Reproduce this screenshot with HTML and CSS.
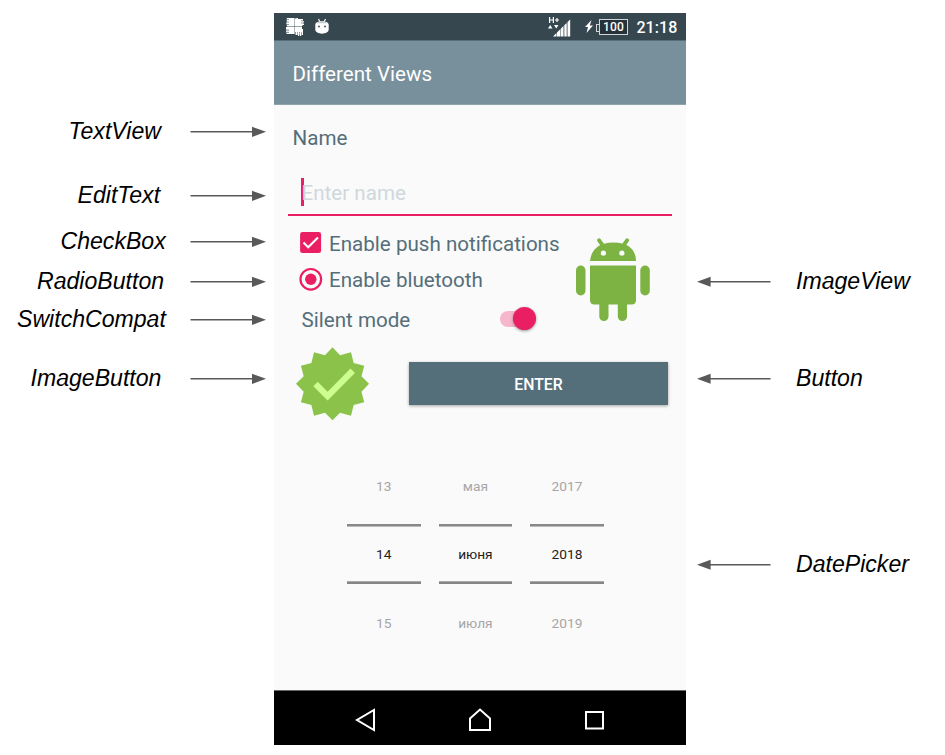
FILE: index.html
```html
<!DOCTYPE html>
<html lang="en">
<head>
<meta charset="utf-8">
<title>Different Views</title>
<link rel="stylesheet" href="styles.css">
</head>
<body>
<svg class="defs" width="0" height="0"><defs>
  <symbol id="arrow" viewBox="0 0 76 12"><path d="M.5 5.800h63" stroke="#595959" stroke-width="1.500"/><path d="M62 .7 76 5.800l-14 5.100z" fill="#595959"/></symbol>
</defs></svg>
<main class="board">
  <section class="notes left">
    <div class="note textview"><span>TextView</span><svg class="arrow"><use href="#arrow"/></svg></div>
    <div class="note edittext"><span>EditText</span><svg class="arrow"><use href="#arrow"/></svg></div>
    <div class="note checkbox"><span>CheckBox</span><svg class="arrow"><use href="#arrow"/></svg></div>
    <div class="note radiobutton"><span>RadioButton</span><svg class="arrow"><use href="#arrow"/></svg></div>
    <div class="note switchcompat"><span>SwitchCompat</span><svg class="arrow"><use href="#arrow"/></svg></div>
    <div class="note imagebutton"><span>ImageButton</span><svg class="arrow"><use href="#arrow"/></svg></div>
  </section>

  <section class="phone">
    <header class="status">
      <svg class="ic-hands" width="20" height="20" viewBox="0 0 20 20"><path d="M1.500 1h8v8h-8zM10 2h8v7h-8zM1 10h8.500v7H1zM10 10h7v8h-7z" fill="#fff" fill-opacity=".45"/><path d="M2 1h7.500v8.500H2V8h2V7H1.500V5.500H4v-1H2V3h2V2H2zM10 1.500h1.500V1H13v1h5v1.200h-2v1h3v1.300h-3v1h3V8h-2v1.500h-7zM1 10h8.500v7H2v-1h2v-1.300H1v-1h3v-1.200H1zM10 10h7v2h1v6h-1v-3h-.8v4H15v-4h-.8v4H13v-4h-.8v3H11v-3h-1z" fill="#fff"/></svg>
      <svg class="ic-droid" width="14" height="17" viewBox="0 0 14 17"><path d="M3.500 1 5 4M10.500 1 9 4" stroke="#fff" stroke-width="1.100"/><path d="M.3 6.500C.3 2 13.700 2 13.700 6.500v5c0 5.500-13.400 5.500-13.400 0z" fill="#fff"/><path d="M1.300 5.300C3.500 2.600 10.500 2.600 12.700 5.300z" fill="#c3c9cc"/><circle cx="4" cy="8.500" r=".9" fill="#37474f"/><circle cx="10" cy="8.500" r=".9" fill="#37474f"/></svg>
      <svg class="ic-signal" width="24" height="22" viewBox="0 0 24 22" fill="#fff"><path d="M1.600 0v6M5.400 0v6M1.600 3h3.800M7 3h4M9 1v4" stroke="#fff" stroke-width="1.200"/><path d="M0 11.500 2.200 8l2.300 3.500zM6 8h4.500l-2.200 3.500zM5 19.500 8.500 16v3.500zM9 15.500l3.500-3.500v7.500H9zM13 11.500 15.500 9v10.500H13zM16.300 8.200 18.700 6v13.500h-2.400zM19.500 5 22.200 2.500v17h-2.700z"/></svg>
      <svg class="ic-bolt" width="8" height="13" viewBox="0 0 8 13" fill="#fff"><path d="M6.500 0 0 7h3L1.500 13 8 5.500H4.800z"/></svg>
      <span class="battery">100</span>
      <span class="clock">21:18</span>
    </header>
    <div class="appbar">Different Views</div>
    <div class="content">
      <div class="name">Name</div>
      <div class="edit"><span>Enter name</span></div>
      <div class="options">
        <div class="list">
          <div class="row check"><svg width="22" height="22" viewBox="0 0 22 22"><rect x=".1" y=".1" width="21" height="21" rx="2.400" fill="#e91e63"/><path d="m3.500 10.500 4.700 4.700L18 5.400" fill="none" stroke="#fff" stroke-width="2.100"/></svg><span>Enable push notifications</span></div>
          <div class="row radio"><svg width="24" height="24" viewBox="0 0 24 24"><circle cx="11.800" cy="12.300" r="10.300" fill="none" stroke="#e91e63" stroke-width="2.200"/><circle cx="11.800" cy="12.300" r="5.700" fill="#e91e63"/></svg><span>Enable bluetooth</span></div>
          <div class="row silent"><span>Silent mode</span><i class="switch"></i></div>
        </div>
        <svg class="android" width="74" height="84" viewBox="0 0 74 84" fill="#7cb342"><path d="M14 23C15 14 20 8 28 5.800 34 4 41 4 47 5.800 55 8 60 14 60 23z"/><path d="m23 2.200 4.200 6M51.200 2.200l-4.200 6" stroke="#7cb342" stroke-width="3.800" stroke-linecap="round"/><path d="M14 27.500h46v34.500q0 4.500-4.500 4.500H51v12a4.600 4.600 0 0 1-9.200 0v-12h-9.300v12a4.600 4.600 0 0 1-9.200 0v-12h-4.800Q14 66.500 14 62z"/><rect x="0" y="27.500" width="9.500" height="30" rx="4.700"/><rect x="64.300" y="27.500" width="9.500" height="30" rx="4.700"/><circle cx="27.400" cy="15.200" r="2.600" fill="#fafafa"/><circle cx="45.900" cy="15.200" r="2.600" fill="#fafafa"/></svg>
      </div>
      <div class="actions">
        <svg width="74" height="74" viewBox="0 0 74 74"><path d="M36.500.2 44 8.200 55 5.200 57.700 16 68.200 18.700 65.500 29.200 73 36.700 65.500 44.700 68.200 55.200 57.700 58 55 68.700 44 65.700 36.500 73.200 29 65.700 18 68.700 15.400 58 4.900 55.200 7.700 44.700 0 36.700 7.700 29.200 4.900 18.700 15.400 16 18 5.200 29 8.200z" fill="#8bc34a"/><path d="m19.500 37 12.100 12.100L56.700 23.700" fill="none" stroke="#ccff90" stroke-width="6.200"/></svg>
        <button class="enter">ENTER</button>
      </div>
      <div class="picker">
        <div class="wheel"><span>13</span><b>14</b><span>15</span></div>
        <div class="wheel"><span>мая</span><b>июня</b><span>июля</span></div>
        <div class="wheel"><span>2017</span><b>2018</b><span>2019</span></div>
      </div>
    </div>
    <nav class="nav">
      <svg width="24" height="24" viewBox="0 0 24 24"><path d="M20 2v20L3 12z"/></svg>
      <svg width="24" height="24" viewBox="0 0 24 24"><path d="M2 10.500 12 1.500l10 9V22H2z"/></svg>
      <svg width="24" height="24" viewBox="0 0 24 24"><path d="M4 4h17v16.500H4z"/></svg>
    </nav>
  </section>

  <section class="notes right">
    <div class="note imageview"><svg class="arrow"><use href="#arrow"/></svg><span>ImageView</span></div>
    <div class="note button"><svg class="arrow"><use href="#arrow"/></svg><span>Button</span></div>
    <div class="note datepicker"><svg class="arrow"><use href="#arrow"/></svg><span>DatePicker</span></div>
  </section>
</main>
</body>
</html>
```

FILE: styles.css
```css
* { box-sizing: border-box; }
body { margin: 0; background: #fff; }
svg { display: block; flex: none; }
.defs { position: absolute; }

.board { display: grid; grid-template-columns: 274px 412px 1fr; height: 755px; overflow: hidden; }

.notes { font: italic 23.1px/28px "Liberation Sans", Arial, sans-serif; color: #000; }
.note { display: flex; align-items: center; height: 28px; white-space: nowrap; }
.arrow { width: 76px; height: 12px; margin-top: 1px; }
.left .note { padding-right: 8px; }
.left .arrow { margin-left: auto; }
.textview { margin-top: 117px; padding-left: 68.500px; }
.edittext { margin-top: 36px; padding-left: 77.500px; }
.checkbox { margin-top: 18px; padding-left: 60.500px; }
.radiobutton { margin-top: 12px; padding-left: 37px; }
.switchcompat { margin-top: 10px; padding-left: 17px; }
.imagebutton { margin-top: 31px; padding-left: 30.500px; }
.right .note { padding-left: 11px; gap: 25px; }
.right .arrow { transform: scaleX(-1); width: 74px; }
.imageview { margin-top: 267px; }
.button { margin-top: 69px; }
.datepicker { margin-top: 158px; }

.phone {
  display: flex; flex-direction: column; height: 732px; margin-top: 13px;
  background: #fafafa; color: #546e7a; font-family: Roboto, sans-serif; font-size: 20.6px;
}
.status { display: flex; align-items: center; height: 28px; padding: 0 8.500px 0 11px; background: #37474f; border-bottom: 1px solid #546e7a; color: #fff; }
.ic-droid { margin: -1px 0 0 10px; }
.ic-signal { margin: 2px 0 0 219px; }
.ic-bolt { margin-left: 13px; }
.battery {
  position: relative; margin-left: 6px; width: 29px; height: 16px; border: 1px solid #cfd5d8; background: #263238;
  font-size: 12px; line-height: 14px; font-weight: 500; letter-spacing: .2px; text-align: center;
}
.battery::before { content: ""; position: absolute; left: -4px; top: 4px; width: 3px; height: 6px; border: 1px solid #cfd5d8; border-right: 0; }
.clock { margin: 1px 0 0 auto; font-size: 16px; font-weight: 500; letter-spacing: .1px; }
.appbar { height: 64px; padding: 1px 0 0 18.500px; line-height: 64px; background: #78909c; border-bottom: 1px solid #90a4ae; color: #fff; }

.content { flex: 1; display: flex; flex-direction: column; }
.name { margin: 19px 0 0 18.500px; line-height: 28px; }
.edit { margin: 18px 14px 0; height: 46px; padding: 8px 0 0 13px; border-bottom: 2px solid #e91e63; color: #cfd8dc; line-height: 28px; }
.edit span { display: block; border-left: 3px solid #e91e63; line-height: 26px; padding-top: 2px; text-indent: -2.500px; }
.options { display: flex; padding: 15px 36px 0 25px; justify-content: space-between; align-items: flex-start; height: 117px; }
.row { display: flex; align-items: center; height: 36px; line-height: 26px; }
.check { margin-top: -6px; padding-left: 1px; gap: 7px; }
.check span { margin-top: 1px; }
.radio { gap: 6px; }
.radio span { margin-top: 2px; }
.silent { height: 40px; padding-left: 2.500px; margin-top: 3px; width: 236.500px; justify-content: space-between; }
.switch { position: relative; width: 36px; height: 16px; margin-top: -2px; border-radius: 8px; background: #f6b7cd; }
.switch::after { content: ""; position: absolute; right: 0; top: -4px; width: 23px; height: 23px; border-radius: 50%; background: #e91e63; box-shadow: 0 1px 3px rgba(0,0,0,.4); }
.android { margin-top: 7px; }
.actions { display: flex; justify-content: space-between; padding: 14px 18px 0 22px; }
.enter {
  margin-top: 15px; width: 259px; height: 43px; border: 0; padding: 0; background: #546e7a; color: #fff;
  font: 500 15.8px/45px Roboto, sans-serif; box-shadow: 0 1px 3px rgba(0,0,0,.35);
}
.picker { display: flex; gap: 18px; padding: 46px 0 0 73px; font-size: 13.7px; text-align: center; }
.wheel { width: 73.600px; }
.wheel span, .wheel b { display: block; line-height: 38px; }
.wheel span { color: #a6a6a6; }
.wheel b { position: relative; margin: 19px 0 20px; height: 60px; line-height: 61px; color: #212121; font-weight: 400; }
.wheel b::before, .wheel b::after { content: ""; position: absolute; left: 0; right: 0; height: 3px; background: linear-gradient(#888 2px, #bbb 2px); }
.wheel b::before { top: 0; }
.wheel b::after { bottom: 0; background: linear-gradient(#aaa 1px, #858585 1px); }

.nav { display: flex; height: 55px; padding: 3px 80px 0; align-items: center; justify-content: space-between; background: #000; border-top: 1px solid #666; }
.nav path { fill: none; stroke: #fff; stroke-width: 2; }
```
